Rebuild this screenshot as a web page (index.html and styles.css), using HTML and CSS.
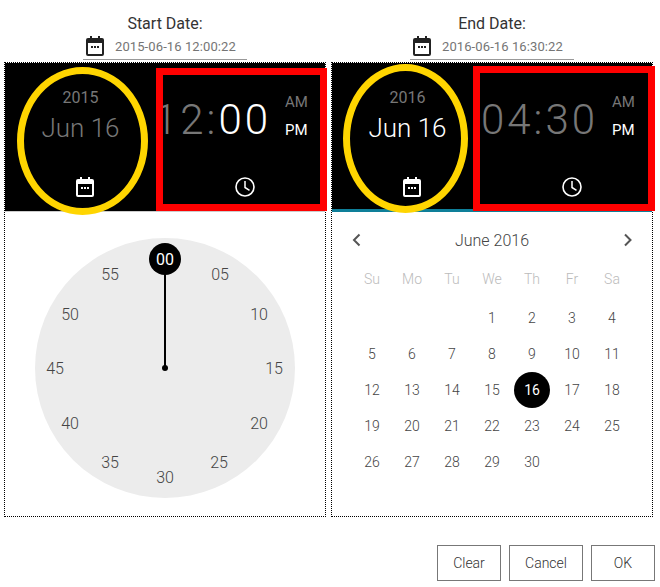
FILE: index.html
```html
<!DOCTYPE html>
<html lang="en">
<head>
    <meta charset="UTF-8">
    <meta name="viewport" content="width=device-width, initial-scale=1.0">
    <title>Date Range Picker</title>
    <link rel="stylesheet" href="styles.css">
</head>
<body>
    <div class="pickers">
        <div class="picker picker-start">
            <div class="label">Start Date:</div>
            <div class="field">
                <svg class="icon" viewBox="0 0 18 20"><path d="M4 0h2v2h6V0h2v2h2a2 2 0 0 1 2 2v14a2 2 0 0 1-2 2H2a2 2 0 0 1-2-2V4a2 2 0 0 1 2-2h2zM2 7v11h14V7z" fill="#222" fill-rule="evenodd"/><path d="M5 10h2v2H5zM8 10h2v2H8zM11 10h2v2h-2z" fill="#222"/></svg>
                <span class="field-value">2015-06-16 12:00:22</span>
            </div>
            <div class="panel">
                <div class="head">
                    <div class="head-date">
                        <div class="year">2015</div>
                        <div class="day dim">Jun 16</div>
                        <svg class="head-icon" viewBox="0 0 18 20"><path d="M4 0h2v2h6V0h2v2h2a2 2 0 0 1 2 2v14a2 2 0 0 1-2 2H2a2 2 0 0 1-2-2V4a2 2 0 0 1 2-2h2zM2 7v11h14V7z" fill="#fff" fill-rule="evenodd"/><path d="M5 10h2v2H5zM8 10h2v2H8zM11 10h2v2h-2z" fill="#fff"/></svg>
                    </div>
                    <div class="head-time">
                        <div class="time-row">
                            <div class="time"><span class="dim">12:</span><span>00</span></div>
                            <div class="ampm"><span class="dim">AM</span><span>PM</span></div>
                        </div>
                        <svg class="head-icon clock-icon" viewBox="0 0 20 20"><circle cx="10" cy="10" r="9" fill="none" stroke="#fff" stroke-width="1.6"/><path d="M10 4v6.5l4.5 2.8" fill="none" stroke="#fff" stroke-width="1.5"/></svg>
                    </div>
                </div>
                <div class="body">
                    <svg class="dial" viewBox="0 0 260 260">
                        <circle cx="130" cy="130" r="130" fill="#ececec"/>
                        <rect x="129" y="21" width="2" height="109" fill="#000"/>
                        <circle cx="130" cy="130" r="3" fill="#000"/>
                        <circle cx="130" cy="21" r="16" fill="#000"/>
                        <text x="130" y="27" fill="#fff">00</text>
                        <text x="185" y="42">05</text>
                        <text x="224" y="82">10</text>
                        <text x="239" y="136">15</text>
                        <text x="224" y="191">20</text>
                        <text x="184" y="230">25</text>
                        <text x="130" y="245">30</text>
                        <text x="75" y="230">35</text>
                        <text x="35" y="191">40</text>
                        <text x="20" y="136">45</text>
                        <text x="35" y="82">50</text>
                        <text x="75" y="42">55</text>
                    </svg>
                </div>
            </div>
            <div class="mark-date"></div>
            <div class="mark-time"></div>
        </div>

        <div class="picker picker-end">
            <div class="label">End Date:</div>
            <div class="field">
                <svg class="icon" viewBox="0 0 18 20"><path d="M4 0h2v2h6V0h2v2h2a2 2 0 0 1 2 2v14a2 2 0 0 1-2 2H2a2 2 0 0 1-2-2V4a2 2 0 0 1 2-2h2zM2 7v11h14V7z" fill="#222" fill-rule="evenodd"/><path d="M5 10h2v2H5zM8 10h2v2H8zM11 10h2v2h-2z" fill="#222"/></svg>
                <span class="field-value">2016-06-16 16:30:22</span>
            </div>
            <div class="panel">
                <div class="head">
                    <div class="head-date">
                        <div class="year">2016</div>
                        <div class="day">Jun 16</div>
                        <svg class="head-icon" viewBox="0 0 18 20"><path d="M4 0h2v2h6V0h2v2h2a2 2 0 0 1 2 2v14a2 2 0 0 1-2 2H2a2 2 0 0 1-2-2V4a2 2 0 0 1 2-2h2zM2 7v11h14V7z" fill="#fff" fill-rule="evenodd"/><path d="M5 10h2v2H5zM8 10h2v2H8zM11 10h2v2h-2z" fill="#fff"/></svg>
                    </div>
                    <div class="head-time">
                        <div class="time-row">
                            <div class="time dim">04:30</div>
                            <div class="ampm"><span class="dim">AM</span><span>PM</span></div>
                        </div>
                        <svg class="head-icon clock-icon" viewBox="0 0 20 20"><circle cx="10" cy="10" r="9" fill="none" stroke="#fff" stroke-width="1.6"/><path d="M10 4v6.5l4.5 2.8" fill="none" stroke="#fff" stroke-width="1.5"/></svg>
                    </div>
                </div>
                <div class="body">
                    <div class="cal">
                        <div class="cal-title">
                            <svg class="chev" viewBox="0 0 10 14"><path d="M7.5 1.5L2 7l5.5 5.5" fill="none" stroke="#555" stroke-width="2"/></svg>
                            <span>June 2016</span>
                            <svg class="chev" viewBox="0 0 10 14"><path d="M3 1.5L8.5 7 3 12.5" fill="none" stroke="#555" stroke-width="2"/></svg>
                        </div>
                        <div class="cal-grid weekdays">
                            <span>Su</span><span>Mo</span><span>Tu</span><span>We</span><span>Th</span><span>Fr</span><span>Sa</span>
                        </div>
                        <div class="cal-grid days">
                            <span></span><span></span><span></span><span>1</span><span>2</span><span>3</span><span>4</span>
                            <span>5</span><span>6</span><span>7</span><span>8</span><span>9</span><span>10</span><span>11</span>
                            <span>12</span><span>13</span><span>14</span><span>15</span><span class="today">16</span><span>17</span><span>18</span>
                            <span>19</span><span>20</span><span>21</span><span>22</span><span>23</span><span>24</span><span>25</span>
                            <span>26</span><span>27</span><span>28</span><span>29</span><span>30</span><span></span><span></span>
                        </div>
                    </div>
                </div>
            </div>
            <div class="mark-date"></div>
            <div class="mark-time"></div>
        </div>
    </div>

    <div class="actions">
        <button class="btn btn-clear">Clear</button>
        <button class="btn btn-cancel">Cancel</button>
        <button class="btn btn-ok">OK</button>
    </div>
</body>
</html>
```

FILE: styles.css
```css
body {
    font-family: Roboto, 'Liberation Sans', sans-serif;
    font-weight: 300;
    background-color: #fff;
    color: #333;
    margin: 0;
}

.pickers {
    display: flex;
    gap: 5px;
    padding: 14px 0 0 4px;
}

.picker {
    position: relative;
    width: 322px;
}

.label {
    text-align: center;
    font-size: 16px;
    font-weight: 400;
    line-height: 19px;
    color: #333;
}

.field {
    display: flex;
    align-items: center;
    gap: 11px;
    width: 164px;
    height: 27px;
    margin: 0 auto;
    padding-left: 3px;
    box-sizing: border-box;
    border-bottom: 1px solid #999;
}

.icon {
    width: 18px;
    height: 20px;
    flex: none;
}

.field-value {
    font-size: 13px;
    font-weight: 400;
    letter-spacing: 0.1px;
    color: #757575;
}

.panel {
    height: 455px;
    margin-top: 2px;
    border: 1px dotted #000;
    box-sizing: border-box;
}

.head {
    display: flex;
    height: 149px;
    background-color: #000;
    border-bottom: 1px solid #ccc;
    box-sizing: border-box;
    color: #fff;
}

.picker-end .head {
    border-bottom: 3px solid #0e7f99;
}

.dim {
    color: #777;
}

.head-date {
    width: 151px;
    text-align: center;
}

.head-time {
    flex: 1;
}

.year {
    margin-top: 26px;
    font-size: 16px;
    font-weight: 400;
    line-height: 18px;
    color: #777;
}

.day {
    margin-top: 3px;
    font-size: 26px;
    line-height: 36px;
}

.head-icon {
    display: block;
    width: 18px;
    height: 20px;
    margin: 31px 0 0 71px;
}

.clock-icon {
    width: 20px;
    margin-left: 79px;
}

.time-row {
    display: flex;
    align-items: flex-start;
    padding: 28px 0 0 6px;
}

.time {
    width: 109px;
    margin-right: 14px;
    padding-top: 3px;
    flex: none;
    white-space: nowrap;
    display: flex;
    justify-content: flex-end;
    font-size: 42px;
    letter-spacing: 3px;
    line-height: 52px;
}

.ampm {
    display: flex;
    flex-direction: column;
    gap: 10px;
    margin-top: 2px;
    font-size: 15px;
    font-weight: 400;
    line-height: 18px;
}

.body {
    display: flex;
    justify-content: center;
}

.dial {
    width: 260px;
    height: 260px;
    margin-top: 26px;
}

.dial text {
    font-family: Roboto, 'Liberation Sans', sans-serif;
    font-size: 16px;
    font-weight: 300;
    fill: #444;
    text-anchor: middle;
}

.dial text[fill] {
    fill: #fff;
    font-weight: 400;
}

.cal {
    width: 280px;
}

.cal-title {
    display: flex;
    justify-content: space-between;
    align-items: center;
    height: 20px;
    margin-top: 18px;
    font-size: 16px;
    color: #444;
}

.chev {
    width: 10px;
    height: 14px;
}

.cal-grid {
    display: grid;
    grid-template-columns: repeat(7, 40px);
    text-align: center;
    font-size: 14px;
}

.weekdays {
    margin-top: 20px;
    line-height: 18px;
    color: #bbb;
}

.days {
    grid-auto-rows: 36px;
    margin-top: 12px;
    color: #444;
}

.days span {
    display: flex;
    align-items: center;
    justify-content: center;
}

.days .today {
    width: 36px;
    height: 36px;
    margin-left: 2px;
    border-radius: 50%;
    background-color: #000;
    color: #fff;
    font-weight: 400;
}

.mark-date,
.mark-time {
    position: absolute;
    box-sizing: border-box;
}

.mark-date {
    border: 7px solid #ffd500;
    border-radius: 50%;
}

.mark-time {
    border: 7px solid #f00;
}

.picker-start .mark-date {
    left: 13px;
    top: 53px;
    width: 131px;
    height: 148px;
}

.picker-start .mark-time {
    left: 152px;
    top: 54px;
    width: 171px;
    height: 143px;
}

.picker-end .mark-date {
    left: 12px;
    top: 50px;
    width: 125px;
    height: 149px;
}

.picker-end .mark-time {
    left: 142px;
    top: 52px;
    width: 182px;
    height: 145px;
}

.actions {
    display: flex;
    justify-content: flex-end;
    gap: 8px;
    padding: 28px 5px 0 0;
}

.btn {
    height: 36px;
    padding: 0;
    background-color: #fff;
    border: 1px solid #777;
    font-family: inherit;
    font-size: 14px;
    font-weight: 300;
    color: #333;
}

.btn-clear,
.btn-ok {
    width: 64px;
}

.btn-cancel {
    width: 74px;
}
```
